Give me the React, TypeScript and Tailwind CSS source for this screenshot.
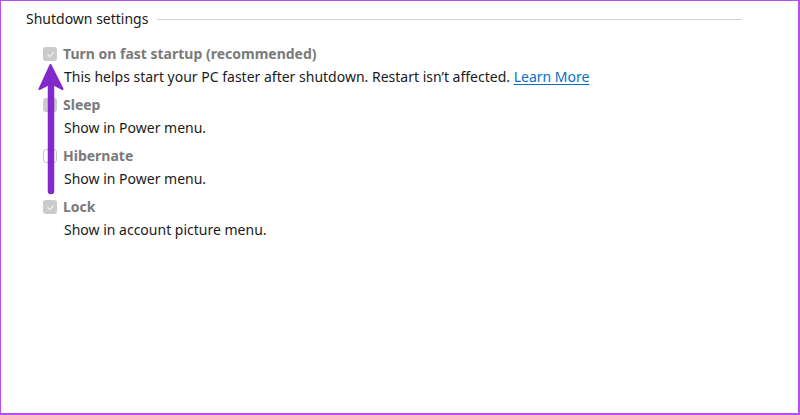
import React from 'react';

type Option = {
  label: string;
  desc: React.ReactNode;
  checked: boolean;
};

function Check({ checked }: { checked: boolean }) {
  if (!checked) {
    return <span className="w-[14px] h-[14px] rounded-[3px] border border-[#c8c8c8] bg-white shrink-0" />;
  }
  return (
    <span className="w-[14px] h-[14px] rounded-[3px] bg-[#cbcbcb] shrink-0 flex items-center justify-center">
      <svg width="9" height="9" viewBox="0 0 10 10" fill="none">
        <path d="M2 5.2 L4.2 7.3 L8.2 2.8" stroke="#f2f2f2" strokeWidth="1.2" strokeLinecap="round" strokeLinejoin="round" />
      </svg>
    </span>
  );
}

const options: Option[] = [
  {
    label: 'Turn on fast startup (recommended)',
    checked: true,
    desc: (
      <>
        This helps start your PC faster after shutdown. Restart isn’t affected.{' '}
        <span className="text-[#0a6fc2] underline underline-offset-2">Learn More</span>
      </>
    ),
  },
  { label: 'Sleep', checked: true, desc: 'Show in Power menu.' },
  { label: 'Hibernate', checked: false, desc: 'Show in Power menu.' },
  { label: 'Lock', checked: true, desc: 'Show in account picture menu.' },
];

export default function App() {
  return (
    <div
      className="relative w-[800px] h-[415px] bg-white border-l border-t border-r-2 border-b-2 border-[#b94ef0] overflow-hidden text-[14px]"
      style={{ fontFamily: '"Noto Sans", "Open Sans", sans-serif' }}
    >
      <div className="flex items-center pl-[25px] pr-[56px] pt-[8px]">
        <span className="text-[#1b1b1b] leading-[20px]">Shutdown settings</span>
        <div className="flex-1 h-px bg-[#d0d0d0] ml-[9px] mt-[1px]" />
      </div>

      <div className="flex flex-col pl-[42px] pt-[15px]">
        {options.map((o) => (
          <div key={o.label} className="flex flex-col h-[51px]">
            <div className="flex items-center gap-[6px] h-[20px]">
              <Check checked={o.checked} />
              <span className="font-bold text-[#7a7a7a] leading-[20px]">{o.label}</span>
            </div>
            <div className="pl-[21px] mt-[3px] text-[#1b1b1b] leading-[20px]">{o.desc}</div>
          </div>
        ))}
      </div>

      <svg className="absolute left-0 top-0" width="800" height="415" viewBox="0 0 800 415" fill="none">
        <line x1="50" y1="82" x2="50" y2="190" stroke="#8229cc" strokeWidth="6.5" strokeLinecap="round" />
        <path d="M49.5 64 L61.5 88 L50 82 L38.5 88 Z" fill="#8229cc" stroke="#8229cc" strokeWidth="2" strokeLinejoin="round" />
      </svg>
    </div>
  );
}
